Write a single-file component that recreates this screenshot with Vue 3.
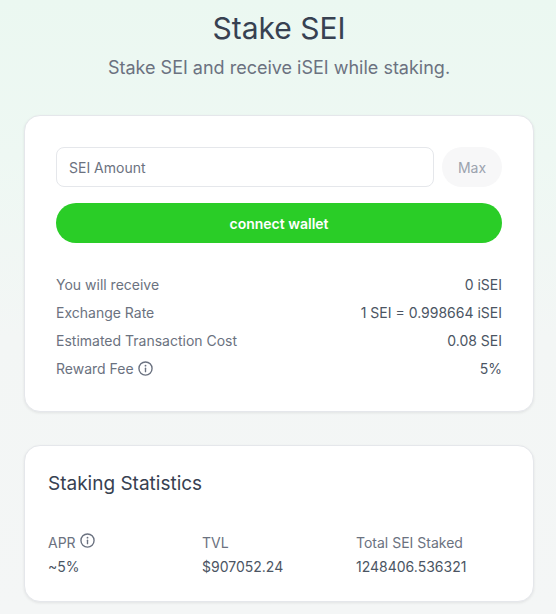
<script setup>
const rows = [
  { label: 'You will receive', value: '0 iSEI' },
  { label: 'Exchange Rate', value: '1 SEI = 0.998664 iSEI' },
  { label: 'Estimated Transaction Cost', value: '0.08 SEI' },
  { label: 'Reward Fee', value: '5%', info: true },
]

const stats = [
  { label: 'APR', value: '~5%', info: true },
  { label: 'TVL', value: '$907052.24' },
  { label: 'Total SEI Staked', value: '1248406.536321' },
]
</script>

<template>
  <div class="page">
    <h1 class="title">Stake SEI</h1>
    <p class="subtitle">Stake SEI and receive iSEI while staking.</p>

    <section class="card stake-card">
      <div class="amount-row">
        <input class="amount-input" type="text" placeholder="SEI Amount" />
        <button class="max-btn">Max</button>
      </div>
      <button class="connect-btn">connect wallet</button>

      <div class="rows">
        <div v-for="row in rows" :key="row.label" class="row">
          <span class="row-label">
            {{ row.label }}
            <svg v-if="row.info" class="info" viewBox="0 0 24 24" fill="none" stroke="currentColor" stroke-width="2.2" stroke-linecap="round">
              <circle cx="12" cy="12" r="10.5" />
              <path d="M12 11.5v5.5" />
              <path d="M12 7.2v.2" stroke-width="2.8" />
            </svg>
          </span>
          <span class="row-value">{{ row.value }}</span>
        </div>
      </div>
    </section>

    <section class="card stats-card">
      <h2 class="stats-title">Staking Statistics</h2>
      <div class="stats-grid">
        <div v-for="stat in stats" :key="stat.label">
          <div class="stat-label">
            {{ stat.label }}
            <svg v-if="stat.info" class="info info-up" viewBox="0 0 24 24" fill="none" stroke="currentColor" stroke-width="2.2" stroke-linecap="round">
              <circle cx="12" cy="12" r="10.5" />
              <path d="M12 11.5v5.5" />
              <path d="M12 7.2v.2" stroke-width="2.8" />
            </svg>
          </div>
          <div class="stat-value">{{ stat.value }}</div>
        </div>
      </div>
    </section>
  </div>
</template>

<style>
html,
body {
  margin: 0;
}
</style>

<style scoped>
.page {
  box-sizing: border-box;
  width: 556px;
  height: 614px;
  overflow: hidden;
  padding: 10px 22px 0 24px;
  background: linear-gradient(180deg, #ebf8f1 0%, #eef8f3 25%, #f3f6f5 55%, #f4f6f6 100%);
  font-family: Inter, "Liberation Sans", sans-serif;
}

.title {
  margin: 0;
  font-size: 30px;
  line-height: 36px;
  font-weight: 400;
  text-align: center;
  color: #374151;
}

.subtitle {
  margin: 8px 0 0;
  font-size: 18px;
  line-height: 28px;
  font-weight: 400;
  text-align: center;
  color: #6b7280;
}

.card {
  box-sizing: border-box;
  background: #fff;
  border: 1px solid #e5e7eb;
  border-radius: 16px;
  box-shadow: 0 1px 3px rgba(0, 0, 0, 0.08);
}

.stake-card {
  height: 297px;
  margin-top: 33px;
  padding: 31px;
}

.amount-row {
  display: flex;
  gap: 8px;
}

.amount-input {
  box-sizing: border-box;
  flex: 1;
  min-width: 0;
  height: 40px;
  padding: 0 12px;
  border: 1px solid #e5e7eb;
  border-radius: 8px;
  outline: none;
  background: #fff;
  font-family: inherit;
  font-size: 14px;
  color: #374151;
}

.amount-input::placeholder {
  color: #6b7280;
  opacity: 1;
}

.max-btn {
  width: 60px;
  height: 40px;
  border: 0;
  border-radius: 20px;
  background: #f7f7f8;
  font-family: inherit;
  font-size: 14px;
  color: #9ca3af;
}

.connect-btn {
  display: block;
  width: 100%;
  height: 40px;
  margin-top: 16px;
  border: 0;
  border-radius: 20px;
  background: #2acd27;
  font-family: inherit;
  font-size: 14px;
  font-weight: 600;
  color: #fff;
}

.rows {
  margin-top: 27px;
}

.row {
  display: flex;
  justify-content: space-between;
  height: 28px;
  align-items: center;
  font-size: 14px;
}

.row-label {
  display: flex;
  align-items: center;
  gap: 4px;
  color: #6b7280;
}

.row-value {
  color: #4b5563;
}

.info {
  width: 15px;
  height: 15px;
}

.info-up {
  position: relative;
  top: -2px;
}

.stats-card {
  height: 157px;
  margin-top: 33px;
  padding: 23px;
}

.stats-title {
  margin: 0;
  font-size: 19px;
  line-height: 30px;
  font-weight: 400;
  color: #374151;
}

.stats-grid {
  display: grid;
  grid-template-columns: repeat(3, 1fr);
  margin-top: 31px;
}

.stat-label {
  display: flex;
  align-items: center;
  gap: 4px;
  height: 24px;
  margin-bottom: 1px;
  font-size: 14px;
  color: #6b7280;
}

.stat-value {
  height: 24px;
  line-height: 24px;
  font-size: 14px;
  color: #4b5563;
}
</style>
